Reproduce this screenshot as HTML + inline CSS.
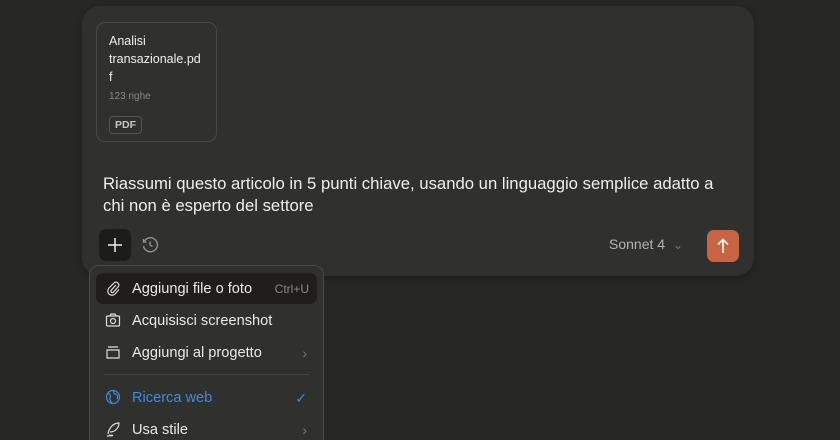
<!DOCTYPE html>
<html><head><style>
*{box-sizing:border-box;margin:0;padding:0}
html,body{width:840px;height:440px;overflow:hidden}
body{background:#262624;font-family:"Liberation Sans",sans-serif;position:relative;color:#e8e6e0}
.card{position:absolute;left:82px;top:6px;width:672px;height:270px;background:#30302e;border-radius:18px;box-shadow:0 2px 6px rgba(0,0,0,.25)}
.file{position:absolute;left:14px;top:16px;width:121px;height:120px;border:1px solid #4a4945;border-radius:9px;padding:9px 12px}
.fn{font-size:12.5px;line-height:18px;color:#f0eee8;width:93px;overflow-wrap:anywhere}
.rows{font-size:10px;color:#8a8883;margin-top:5px}
.pdf{display:inline-block;margin-top:14px;font-size:10.5px;font-weight:bold;color:#c8c6c0;border:1px solid #55544f;border-radius:4px;padding:2px 5px}
.msg{position:absolute;left:21px;top:167px;font-size:16.7px;line-height:22px;color:#f0eee8;width:625px}
.plus{position:absolute;left:17px;top:223px;width:32px;height:32px;background:#1c1c1b;border-radius:7px}
.hist{position:absolute;left:59px;top:230px}
.model{position:absolute;left:527px;top:230px;font-size:14px;color:#b5b3ad}
.send{position:absolute;left:625px;top:224px;width:32px;height:32px;background:#c96442;border-radius:7px}
.menu{position:absolute;left:89px;top:265px;width:235px;height:190px;background:#30302e;border:1px solid #4a4945;border-radius:10px}
.it{position:absolute;left:6px;width:221px;height:31px;border-radius:7px;font-size:14.6px;line-height:32px;padding-left:36px;color:#ebe9e3}
.it svg{position:absolute;left:9px;top:7px}
.sel{background:#1f1e1d}
.kb{position:absolute;right:8px;font-size:12px;color:#8a8883}
.chev{position:absolute;right:10px;top:0;color:#7a7873;font-size:14px}
.sep{position:absolute;left:14px;right:14px;top:108px;height:1px;background:#45443f}
</style></head><body>
<div class="card">
 <div class="file"><div class="fn">Analisi transazionale.pdf</div><div class="rows">123 righe</div><span class="pdf">PDF</span></div>
 <div class="msg">Riassumi questo articolo in 5 punti chiave, usando un linguaggio semplice adatto a chi non è esperto del settore</div>
 <div class="plus"><svg width="32" height="32"><path d="M16 9v14M9 16h14" stroke="#eee" stroke-width="1.5"/></svg></div>
 <svg class="hist" width="18" height="18" viewBox="0 0 18 18" fill="none" stroke="#9a9893" stroke-width="1.3"><path d="M3.5 5A7 7 0 1 1 2.5 10"/><path d="M9 5.5V9l2.5 1.5"/><path d="M2.5 3v3h3"/></svg>
 <div class="model">Sonnet 4 <span style="color:#7a7873;font-size:12px;margin-left:4px">&#8964;</span></div>
 <div class="send"><svg width="32" height="32"><path d="M16 23V10M11 14.5l5-5 5 5" stroke="#fff" stroke-width="1.6" fill="none"/></svg></div>
</div>
<div class="menu">
 <div class="it sel" style="top:7px"><svg width="16" height="16" viewBox="0 0 16 16" fill="none" stroke="#ddd" stroke-width="1.2"><path d="M11 5l-5 5.5a1.5 1.5 0 0 0 2 2l5.5-6a3 3 0 0 0-4-4L4 8a4.2 4.2 0 0 0 6 6l4-4.5"/></svg>Aggiungi file o foto<span class="kb">Ctrl+U</span></div>
 <div class="it" style="top:39px"><svg width="16" height="16" viewBox="0 0 16 16" fill="none" stroke="#ddd" stroke-width="1.2"><rect x="1.5" y="4" width="13" height="10" rx="1"/><path d="M5 4l1-2h4l1 2"/><circle cx="8" cy="9" r="2.5"/></svg>Acquisisci screenshot</div>
 <div class="it" style="top:71px"><svg width="16" height="16" viewBox="0 0 16 16" fill="none" stroke="#ddd" stroke-width="1.2"><path d="M3 3h10M2 6h12v8H2z"/></svg>Aggiungi al progetto<span class="chev">&#8250;</span></div>
 <div class="sep"></div>
 <div class="it" style="top:116px;color:#3b8ae0"><svg width="16" height="16" viewBox="0 0 16 16" fill="none" stroke="#3b8ae0" stroke-width="1.2"><circle cx="8" cy="8" r="6.5"/><path d="M3 4c2 1 3 3 2 5s1 3 2 5M9 1.8c-1 2 0 3 2 3.5s2 3 1 5"/></svg>Ricerca web<span class="chev" style="color:#3b8ae0">&#10003;</span></div>
 <div class="it" style="top:148px"><svg width="16" height="16" viewBox="0 0 16 16" fill="none" stroke="#ddd" stroke-width="1.2"><path d="M3 13C4 7 8 2 14 2c0 5-4 9-9 9M2 15h2l1-1 1 1 1-1 1 1"/></svg>Usa stile<span class="chev">&#8250;</span></div>
</div>
</body></html>
